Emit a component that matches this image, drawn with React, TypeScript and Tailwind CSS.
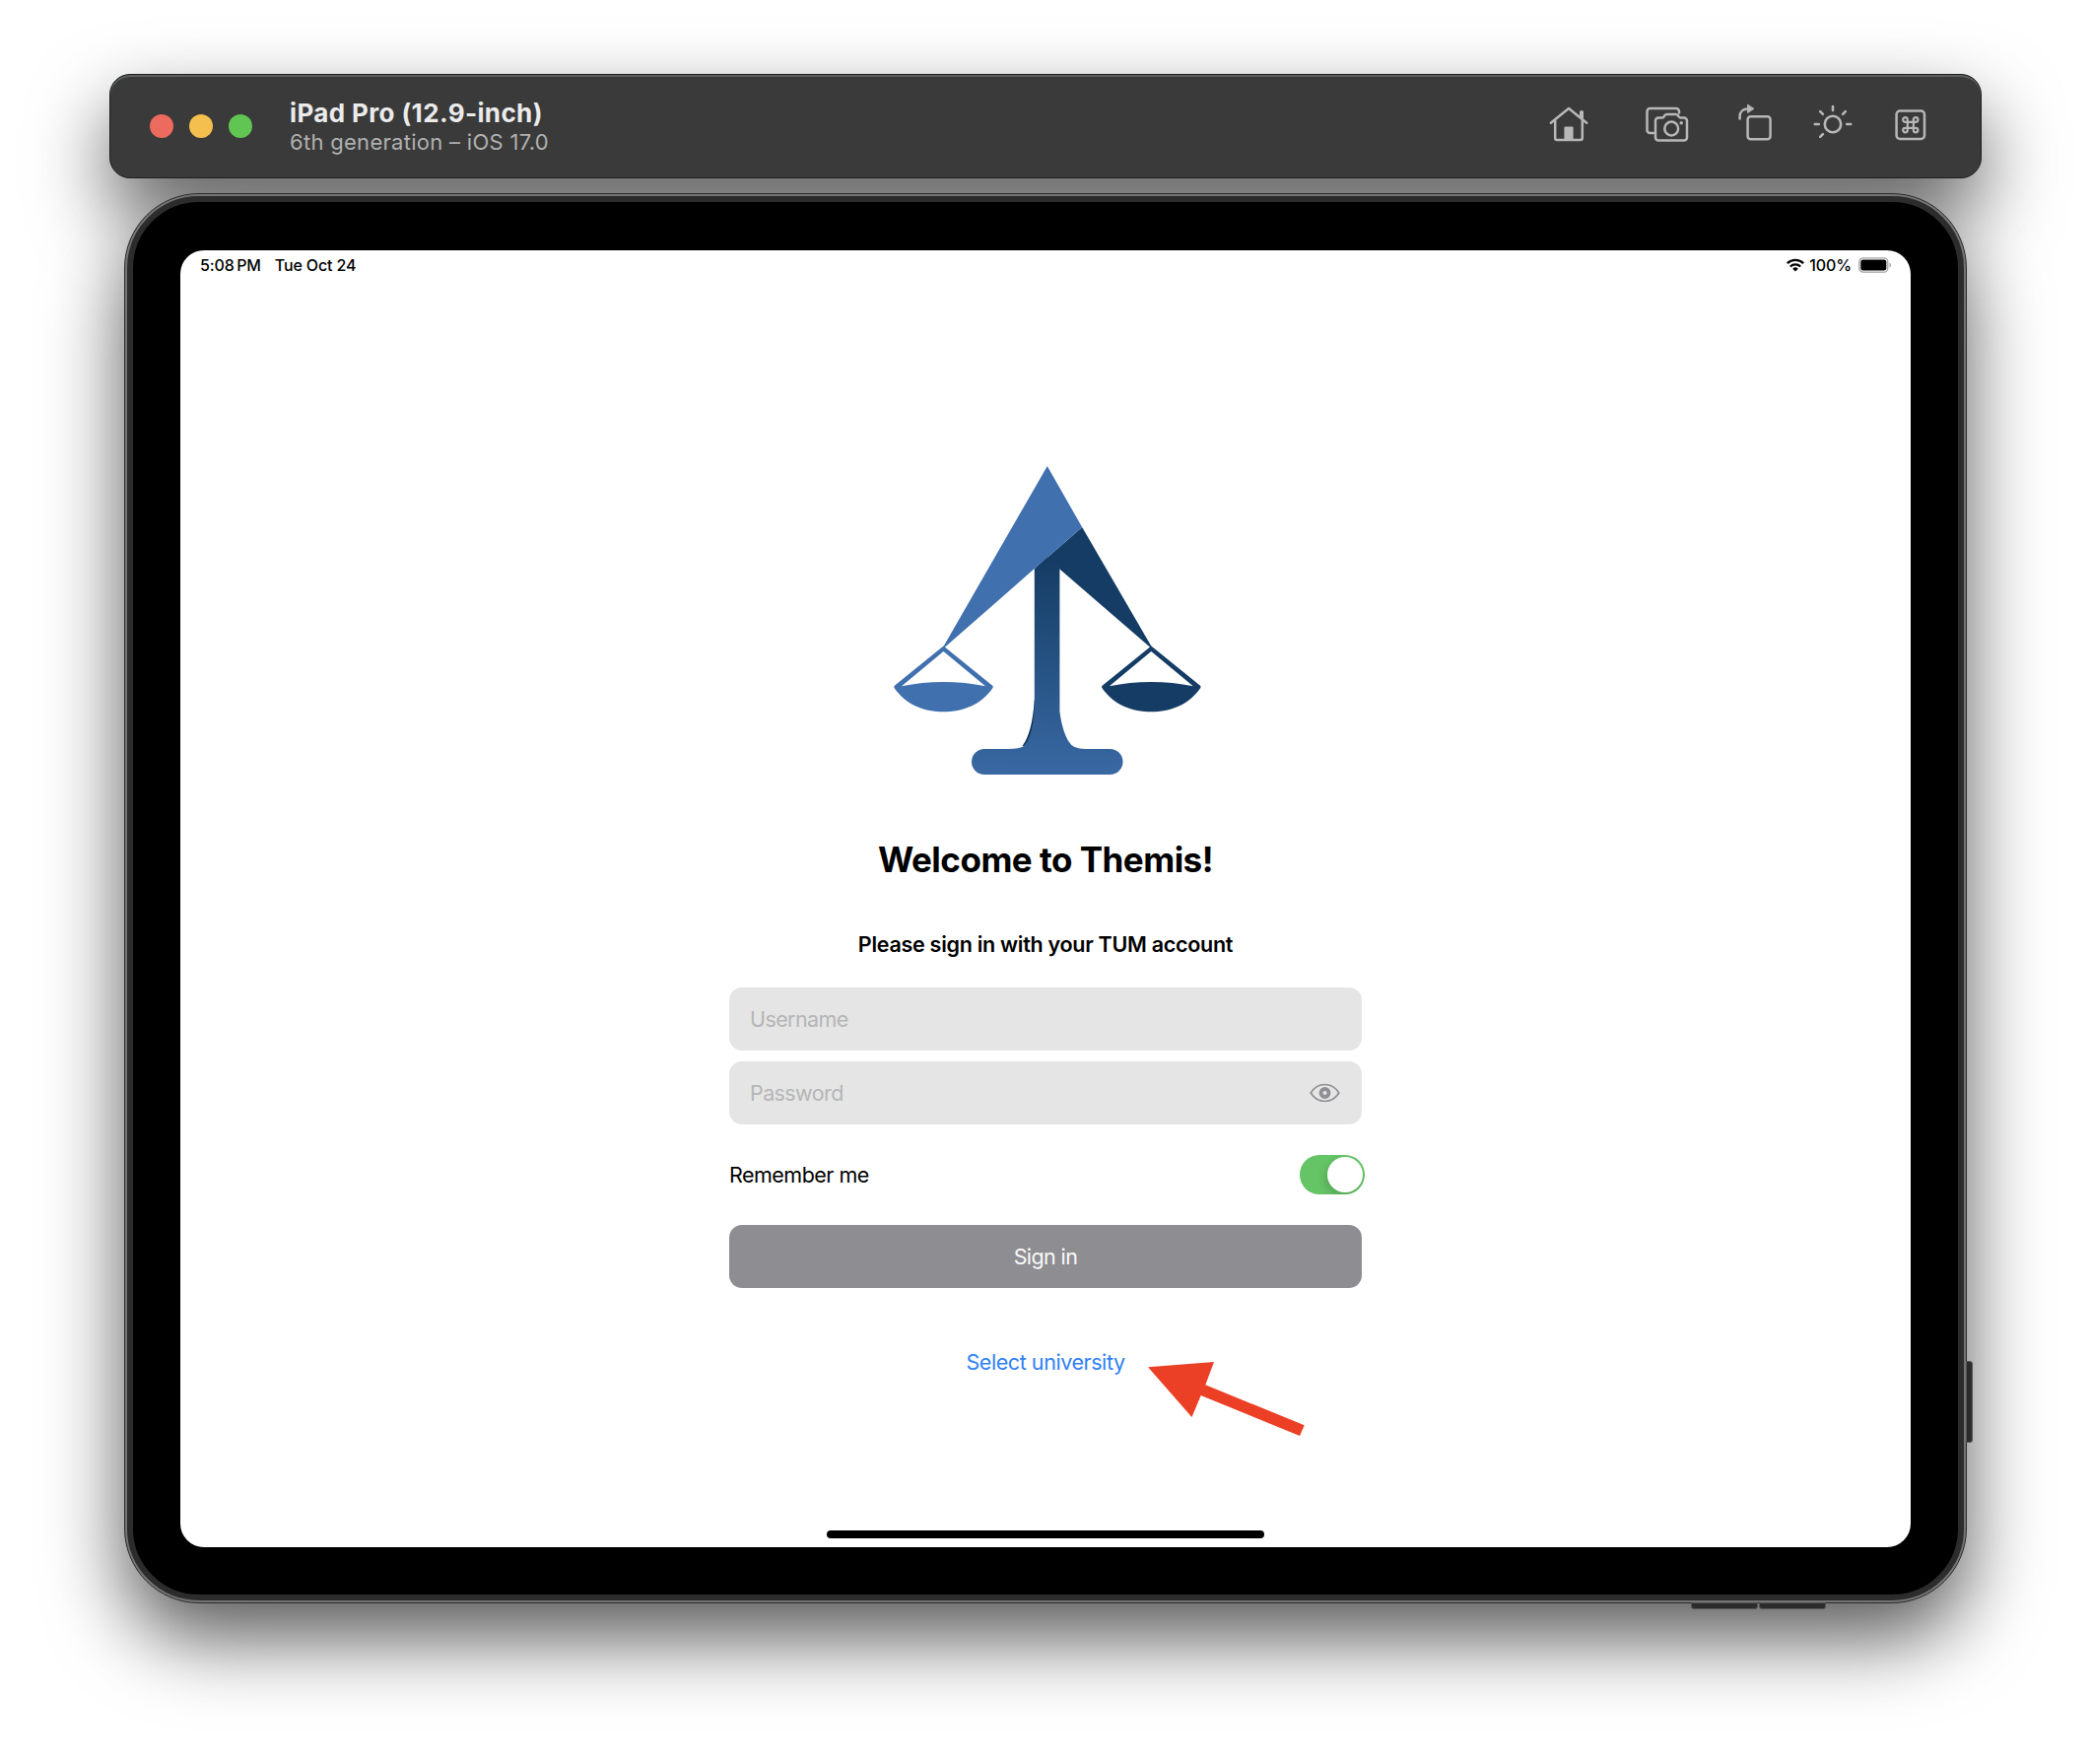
import React from "react";

function HomeIcon() {
  return (
    <svg width="40" height="36" viewBox="0 0 40 36" fill="none" stroke="#b7b7b7" strokeWidth="2.5" strokeLinecap="round" strokeLinejoin="round">
      <path d="M1.8 16.8 20 2 38.2 16.8" />
      <path d="M6.2 14.5V32a2 2 0 0 0 2 2h23.600a2 2 0 0 0 2-2V14.500" />
      <path d="M31 5.300a1 1 0 0 1 1-1h2a1 1 0 0 1 1 1V13L31 10z" fill="#b7b7b7" stroke="none" />
      <path d="M15.400 21.500a1 1 0 0 1 1-1h7.200a1 1 0 0 1 1 1V34h-9.200z" fill="#b7b7b7" stroke="none" />
    </svg>
  );
}

function CameraIcon() {
  return (
    <svg width="44" height="36" viewBox="0 0 44 36" fill="none" stroke="#b7b7b7" strokeWidth="2.5" strokeLinecap="round" strokeLinejoin="round">
      <path d="M34 6.500V5a3 3 0 0 0-3-3H4.500a3 3 0 0 0-3 3v19a3 3 0 0 0 3 3H8" />
      <path d="M13 11.500h3.500c1 0 1.500-.4 2-1.100l.9-1.300c.6-.8 1.200-1.100 2.200-1.100h9c1 0 1.600.3 2.200 1.100l.9 1.300c.5.700 1 1.100 2 1.100H39a3 3 0 0 1 3 3V31.500a3 3 0 0 1-3 3H13a3 3 0 0 1-3-3V14.500a3 3 0 0 1 3-3z" />
      <circle cx="26.200" cy="22.500" r="6.900" />
      <circle cx="36.200" cy="16.800" r="1.800" fill="#b7b7b7" stroke="none" />
    </svg>
  );
}

function RotateIcon() {
  return (
    <svg width="34" height="38" viewBox="0 0 34 38" fill="none" stroke="#b7b7b7" strokeWidth="2.5" strokeLinecap="round" strokeLinejoin="round">
      <rect x="9.600" y="13.200" width="23" height="23" rx="3" />
      <path d="M1.600 15.500V13c0-4.500 3.200-7.500 8-7.500" />
      <path d="M9.600 1.500v8l6-4z" fill="#b7b7b7" strokeWidth="1" />
    </svg>
  );
}

function SunIcon() {
  return (
    <svg width="40" height="40" viewBox="0 0 40 40" fill="none" stroke="#b7b7b7" strokeWidth="2.600" strokeLinecap="round">
      <circle cx="20" cy="21" r="8.200" />
      <path d="M20 3v4M1.800 21h4M34.200 21h4M7.200 8.200l2.700 2.700M32.800 8.200l-2.700 2.700M7.200 33.800l2.700-2.700" />
    </svg>
  );
}

function CommandIcon() {
  return (
    <svg width="32" height="32" viewBox="0 0 32 32" fill="none" stroke="#b7b7b7" strokeWidth="2.500">
      <rect x="1.600" y="1.600" width="28.400" height="28.400" rx="3.500" />
      <path strokeWidth="2.200" d="M12.800 12.800h6v6h-6zM12.800 12.800h-2.300a2.300 2.300 0 1 1 2.300-2.300zM18.800 12.800v-2.300a2.300 2.300 0 1 1 2.300 2.300zM18.800 18.800h2.300a2.300 2.300 0 1 1-2.300 2.300zM12.800 18.800v2.300a2.300 2.300 0 1 1-2.300-2.300z" />
    </svg>
  );
}

function Toolbar() {
  return (
    <header className="relative mx-auto flex h-[106px] w-[1900px] items-center rounded-[21px] border border-[#1d1f1e] bg-[#3a3a3a] pl-[40px] shadow-[inset_0_2px_0_#5c5f5e] before:absolute before:inset-0 before:-z-10 before:rounded-[21px] before:shadow-[0_36px_80px_rgba(0,0,0,0.64)] before:content-['']">
      <div className="flex gap-4">
        <span className="size-6 rounded-full bg-[#ed6a5f]" />
        <span className="size-6 rounded-full bg-[#f5bf4f]" />
        <span className="size-6 rounded-full bg-[#61c554]" />
      </div>
      <div className="mt-[2px] ml-[38px] flex-1 whitespace-nowrap">
        <h1 className="text-[26px] leading-[30px] font-bold tracking-[0.37px] text-[#ebebeb]">iPad Pro (12.9-inch)</h1>
        <p className="text-[22px] leading-[28px] tracking-[0.29px] text-[#b0b0b0]">6th generation – iOS 17.0</p>
      </div>
      <div className="mt-[-4px] mr-[55px] flex items-center">
        <HomeIcon />
        <div className="ml-[58px]"><CameraIcon /></div>
        <div className="-mt-1 ml-[50px]"><RotateIcon /></div>
        <div className="-mt-0.5 ml-[42px]"><SunIcon /></div>
        <div className="mt-0.5 ml-[43px]"><CommandIcon /></div>
      </div>
    </header>
  );
}

function StatusBar() {
  return (
    <div className="flex h-[30px] items-center justify-between pr-[19px] pl-[20px] text-[16px] font-medium tracking-[-0.14px] text-black">
      <div className="flex gap-[14px]">
        <span>5:08{"\u2009"}PM</span>
        <span>Tue Oct 24</span>
      </div>
      <div className="flex items-center">
        <svg width="18" height="14" viewBox="0 0 18 14" fill="none" stroke="black" strokeWidth="2.300">
          <path d="M.8 5.200a11.800 11.800 0 0 1 16.400 0" />
          <path d="M3.800 8.500a7.500 7.500 0 0 1 10.400 0" />
          <path d="M9 13.500 6.200 10.700a4 4 0 0 1 5.600 0z" fill="black" stroke="none" />
        </svg>
        <span className="ml-[5px]">100%</span>
        <svg className="ml-[7px]" width="34" height="16" viewBox="0 0 34 16">
          <rect x=".8" y=".8" width="29" height="14.400" rx="4" fill="none" stroke="#a3a3a3" strokeWidth="1.300" />
          <rect x="2.300" y="2.400" width="26" height="11.200" rx="2.400" />
          <path d="M31.500 5.500c2 .8 2 4.200 0 5z" fill="#a3a3a3" />
        </svg>
      </div>
    </div>
  );
}

function Logo() {
  return (
    <svg className="ml-[4px]" width="312" height="314" viewBox="17.500 13 312 314">
      <defs>
        <linearGradient id="post" x1="0" y1="110" x2="0" y2="326" gradientUnits="userSpaceOnUse">
          <stop offset="0" stopColor="#153c64" />
          <stop offset=".5" stopColor="#265384" />
          <stop offset="1" stopColor="#3968a3" />
        </linearGradient>
        <path
          id="pan"
          fillRule="evenodd"
          d="M0-1-50 39.500Q-50.500 40.500-50 41.500C-38 59-19 65.800 0 65.800S38 59 50 41.500Q50.500 40.500 50 39.500ZM0 4.600 42.500 39.800C15 34-15 34-42.500 39.800Z"
        />
      </defs>
      <path d="M160.300 250Q158 284 148 297L157 296 164 270V250Z" fill="#0e3150" />
      <path d="M160.300 117 173.300 105 185.900 117V262C188 278 192 288 195.500 293Q199 300 212 300H237a13 13 0 0 1 0 26H109.500a13 13 0 0 1 0-26H133Q146 300 149.500 297C157 289 160.300 272 160.300 250Z" fill="url(#post)" />
      <path d="M208.700 75 279.300 196.500 278.500 197.500 185.900 117.500 173 106Z" fill="#153c64" />
      <path d="M173.300 13 208.700 75 160.300 117 68.500 197.500 67.700 196.500Z" fill="#4071ae" />
      <use href="#pan" x="68" y="196.500" fill="#4071ae" />
      <use href="#pan" x="278.800" y="196.500" fill="#153c64" />
    </svg>
  );
}

function EyeIcon() {
  return (
    <svg width="31" height="20" viewBox="0 0 31 20" fill="none" stroke="#8e8e93">
      <path strokeWidth="1.700" d="M1.200 10C4 5.500 9 1.500 15.500 1.500S27 5.500 29.800 10C27 14.500 22 18.500 15.500 18.500S4 14.500 1.200 10Z" />
      <circle cx="15.500" cy="10" r="4" strokeWidth="3.800" />
    </svg>
  );
}

function LoginForm() {
  return (
    <form className="flex w-[642px] flex-col text-[21.5px] leading-[28px] tracking-[-0.6px]">
      <div className="flex h-[64px] items-center rounded-[13px] bg-[#e5e5e5] px-[21px] text-[#b5b5b7]">
        <span>Username</span>
      </div>
      <div className="mt-[11px] flex h-[64px] items-center justify-between rounded-[13px] bg-[#e5e5e5] pr-[22px] pl-[21px] text-[#b5b5b7]">
        <span>Password</span>
        <EyeIcon />
      </div>
      <div className="mt-[31px] -mr-[3px] flex h-10 items-center justify-between text-black">
        <span className="tracking-[-0.52px]">Remember me</span>
        <span className="flex h-10 w-[66px] justify-end overflow-hidden rounded-full bg-[#65c466] p-[2px]">
          <span className="size-9 rounded-full bg-white shadow-[-2px_4px_8px_rgba(0,0,0,0.16)]" />
        </span>
      </div>
      <button type="button" className="mt-[31px] h-[64px] rounded-[13px] bg-[#8e8d92] text-[#fafafa]">
        Sign in
      </button>
    </form>
  );
}

function Arrow() {
  return (
    <svg className="absolute top-[1128px] left-[982px]" width="160" height="76" viewBox="1165 1382 160 76">
      <path d="M1165 1387.300 1232 1382 1223.300 1405.200 1323.700 1446.300 1319 1457 1218.700 1416 1209.500 1438Z" fill="#eb4026" />
    </svg>
  );
}

function Device() {
  return (
    <div className="relative mx-auto mt-[15px] w-[1870px] rounded-[76px] border border-[#2b2b2b] bg-[#747474] p-[2px] before:absolute before:inset-0 before:-z-10 before:rounded-[76px] before:shadow-[0_36px_80px_rgba(0,0,0,0.66)] before:content-['']">
      <span className="absolute top-[1184px] -right-[7px] h-[83px] w-[7px] rounded-r-[3px] border border-[#555] bg-[#2c2c2c]" />
      <span className="absolute right-[211px] -bottom-[7px] h-[7px] w-[68px] rounded-b-[3px] border border-[#555] bg-[#2c2c2c]" />
      <span className="absolute right-[142px] -bottom-[7px] h-[7px] w-[68px] rounded-b-[3px] border border-[#555] bg-[#2c2c2c]" />
      <div className="rounded-[73px] border-[6px] border-[#2c2c2c] bg-black px-12 pt-[49px] pb-12">
        <main className="relative flex h-[1316px] flex-col overflow-hidden rounded-[24px] bg-white">
          <StatusBar />
          <div className="mt-[189px] flex flex-1 flex-col items-center">
            <Logo />
            <h2 className="mt-[63px] text-[35px] leading-[44px] font-bold tracking-[-0.5px] text-black">Welcome to Themis!</h2>
            <p className="mt-[50px] mb-[30px] text-[21.5px] leading-[28px] font-semibold tracking-[-0.28px] text-black">
              Please sign in with your TUM account
            </p>
            <LoginForm />
            <a className="mt-[61px] text-[21.5px] leading-[28px] tracking-[-0.43px] text-[#3181f6]">Select university</a>
          </div>
          <Arrow />
          <div className="mx-auto mb-[9px] h-2 w-[444px] rounded-full bg-black" />
        </main>
      </div>
    </div>
  );
}

export default function App() {
  return (
    <div className="isolate h-[1790px] w-[2122px] overflow-hidden bg-white pt-[75px] font-['Inter',sans-serif]">
      <Toolbar />
      <Device />
    </div>
  );
}
